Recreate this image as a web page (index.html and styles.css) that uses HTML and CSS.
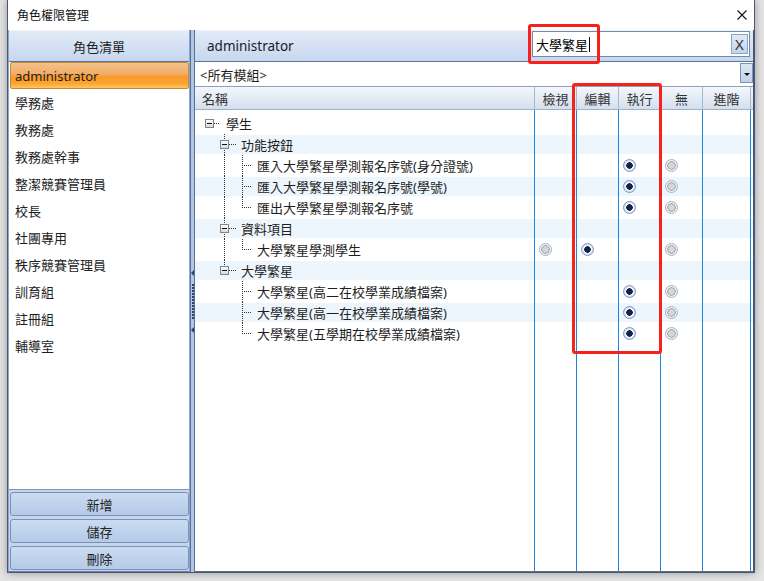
FILE: index.html
```html
<!DOCTYPE html>
<html lang="zh-Hant">

    <head>
        <meta charset="UTF-8">
        <meta name="viewport" content="width=device-width, initial-scale=1.0">
        <title>角色權限管理</title>
        <link rel="stylesheet" href="styles.css">
    </head>

    <body>
        <div class="window">
            <div class="titlebar">
                <span class="title">角色權限管理</span>
                <svg class="close" width="10" height="10" viewBox="0 0 10 10">
                    <path d="M0.5 0.5 L9.5 9.5 M9.5 0.5 L0.5 9.5" stroke="#111" stroke-width="1.1" fill="none" />
                </svg>
            </div>

            <div class="main">
                <!-- 左側：角色清單 -->
                <div class="roles">
                    <div class="pane-head center">角色清單</div>
                    <div class="role-list">
                        <div class="role sel">administrator</div>
                        <div class="role">學務處</div>
                        <div class="role">教務處</div>
                        <div class="role">教務處幹事</div>
                        <div class="role">整潔競賽管理員</div>
                        <div class="role">校長</div>
                        <div class="role">社團專用</div>
                        <div class="role">秩序競賽管理員</div>
                        <div class="role">訓育組</div>
                        <div class="role">註冊組</div>
                        <div class="role">輔導室</div>
                    </div>
                    <div class="actions">
                        <button>新增</button>
                        <button>儲存</button>
                        <button>刪除</button>
                    </div>
                </div>

                <div class="splitter">
                    <span class="arrow"></span>
                    <span class="grip"></span>
                    <span class="arrow"></span>
                </div>

                <!-- 右側：權限設定 -->
                <div class="perm">
                    <div class="pane-head">
                        <span class="role-name">administrator</span>
                        <div class="search">
                            <span>大學繁星</span><span class="caret"></span>
                            <button class="clear">X</button>
                        </div>
                    </div>

                    <div class="module">
                        <span>&lt;所有模組&gt;</span>
                        <span class="drop"><i></i></span>
                    </div>

                    <div class="thead">
                        <div class="th name">名稱</div>
                        <div class="th">檢視</div>
                        <div class="th">編輯</div>
                        <div class="th">執行</div>
                        <div class="th">無</div>
                        <div class="th">進階</div>
                        <div class="th"></div>
                    </div>

                    <div class="tbody">
                        <div class="row gap">
                            <div class="nm"></div><div class="c"></div><div class="c"></div><div class="c"></div><div class="c"></div><div class="c"></div><div class="c"></div>
                        </div>

                        <div class="row">
                            <div class="nm"><span class="exp0"><i class="box"></i></span><span class="t">學生</span></div>
                            <div class="c"></div><div class="c"></div><div class="c"></div><div class="c"></div><div class="c"></div><div class="c"></div>
                        </div>
                        <div class="row alt">
                            <div class="nm"><span class="sp"></span><span class="exp1 full"><i class="box"></i></span><span class="t">功能按鈕</span></div>
                            <div class="c"></div><div class="c"></div><div class="c"></div><div class="c"></div><div class="c"></div><div class="c"></div>
                        </div>
                        <div class="row">
                            <div class="nm"><span class="sp"></span><span class="vl"></span><span class="elb full"></span><span class="t">匯入大學繁星學測報名序號(身分證號)</span></div>
                            <div class="c"></div><div class="c"></div><div class="c"><i class="radio"></i></div><div class="c"><i class="radio off"></i></div><div class="c"></div><div class="c"></div>
                        </div>
                        <div class="row alt">
                            <div class="nm"><span class="sp"></span><span class="vl"></span><span class="elb full"></span><span class="t">匯入大學繁星學測報名序號(學號)</span></div>
                            <div class="c"></div><div class="c"></div><div class="c"><i class="radio"></i></div><div class="c"><i class="radio off"></i></div><div class="c"></div><div class="c"></div>
                        </div>
                        <div class="row">
                            <div class="nm"><span class="sp"></span><span class="vl"></span><span class="elb"></span><span class="t">匯出大學繁星學測報名序號</span></div>
                            <div class="c"></div><div class="c"></div><div class="c"><i class="radio"></i></div><div class="c"><i class="radio off"></i></div><div class="c"></div><div class="c"></div>
                        </div>
                        <div class="row alt">
                            <div class="nm"><span class="sp"></span><span class="exp1 full"><i class="box"></i></span><span class="t">資料項目</span></div>
                            <div class="c"></div><div class="c"></div><div class="c"></div><div class="c"></div><div class="c"></div><div class="c"></div>
                        </div>
                        <div class="row">
                            <div class="nm"><span class="sp"></span><span class="vl"></span><span class="elb"></span><span class="t">大學繁星學測學生</span></div>
                            <div class="c"><i class="radio off"></i></div><div class="c"><i class="radio"></i></div><div class="c"></div><div class="c"><i class="radio off"></i></div><div class="c"></div><div class="c"></div>
                        </div>
                        <div class="row alt">
                            <div class="nm"><span class="sp"></span><span class="exp1"><i class="box"></i></span><span class="t">大學繁星</span></div>
                            <div class="c"></div><div class="c"></div><div class="c"></div><div class="c"></div><div class="c"></div><div class="c"></div>
                        </div>
                        <div class="row">
                            <div class="nm"><span class="sp"></span><span class="vl none"></span><span class="elb full"></span><span class="t">大學繁星(高二在校學業成績檔案)</span></div>
                            <div class="c"></div><div class="c"></div><div class="c"><i class="radio"></i></div><div class="c"><i class="radio off"></i></div><div class="c"></div><div class="c"></div>
                        </div>
                        <div class="row alt">
                            <div class="nm"><span class="sp"></span><span class="vl none"></span><span class="elb full"></span><span class="t">大學繁星(高一在校學業成績檔案)</span></div>
                            <div class="c"></div><div class="c"></div><div class="c"><i class="radio"></i></div><div class="c"><i class="radio off"></i></div><div class="c"></div><div class="c"></div>
                        </div>
                        <div class="row">
                            <div class="nm"><span class="sp"></span><span class="vl none"></span><span class="elb"></span><span class="t">大學繁星(五學期在校學業成績檔案)</span></div>
                            <div class="c"></div><div class="c"></div><div class="c"><i class="radio"></i></div><div class="c"><i class="radio off"></i></div><div class="c"></div><div class="c"></div>
                        </div>

                        <div class="row fill">
                            <div class="nm"></div><div class="c"></div><div class="c"></div><div class="c"></div><div class="c"></div><div class="c"></div><div class="c"></div>
                        </div>
                    </div>
                </div>
            </div>
        </div>

        <!-- 標註框 -->
        <div class="mark mark-search"></div>
        <div class="mark mark-cols"></div>
    </body>

</html>
```

FILE: styles.css
```css
* {
    box-sizing: border-box;
}

body {
    margin: 0;
    height: 581px;
    overflow: hidden;
    background-color: #e4e4e4;
    font-family: "Noto Sans", "Noto Sans CJK TC", sans-serif;
    font-size: 13px;
    color: #1e1e1e;
}

.window {
    margin-left: 7px;
    width: 748px;
    height: 573px;
    border: 1px solid #4c5871;
    border-top: 0;
    background: #fff;
    box-shadow: 0 0 8px rgba(0, 0, 0, 0.35);
    display: flex;
    flex-direction: column;
}

.titlebar {
    height: 30px;
    flex: none;
    display: flex;
    align-items: center;
    justify-content: space-between;
    padding: 0 7px 0 9px;
    font-size: 12px;
    color: #111;
}

.main {
    height: 542px;
    display: flex;
}

/* 面板標頭 */
.pane-head {
    height: 32px;
    flex: none;
    border-top: 1px solid #eef3fa;
    border-bottom: 1px solid #5d7399;
    background: linear-gradient(#e2ebf7, #c5d7ef);
    display: flex;
    align-items: center;
}

.pane-head.center {
    justify-content: center;
}

.roles {
    width: 182px;
    display: flex;
    flex-direction: column;
    border-left: 1px solid #8ea8cd;
    border-right: 1px solid #8ea8cd;
    border-bottom: 1px solid #6b80a6;
}

.role-list {
    flex: 1;
    background: #fff;
    padding-left: 1px;
}

.role {
    height: 27px;
    display: flex;
    align-items: center;
    padding-left: 5px;
}

.role.sel {
    padding-left: 4px;
    border: 1px solid #c58b3c;
    border-radius: 2px;
    background: linear-gradient(#f4c08a 0%, #f1ad66 45%, #fa9a2a 55%, #fca532 82%, #fec560 100%);
}

.actions {
    flex: none;
    border-top: 1px solid #7f96bb;
    background: #c3d6ee;
    padding: 2px 0 1px 1px;
    display: flex;
    flex-direction: column;
    gap: 3px;
}

.actions button {
    height: 24px;
    border: 1px solid #7d91b6;
    border-radius: 3px;
    background: linear-gradient(#cbdcf2, #b3cae7);
    font: inherit;
    color: #222;
    padding: 0;
}

.splitter {
    width: 5px;
    border-left: 1px solid #56709c;
    border-right: 1px solid #56709c;
    background: #b4c7e2;
    display: flex;
    flex-direction: column;
    align-items: center;
    justify-content: center;
    gap: 8px;
}

.splitter .arrow {
    width: 0;
    height: 0;
    border-top: 3px solid transparent;
    border-bottom: 3px solid transparent;
    border-right: 3px solid #2d4068;
}

.splitter .grip {
    width: 2px;
    height: 35px;
    background: repeating-linear-gradient(#2d4068 0 2px, transparent 2px 3px);
}

.perm {
    width: 559px;
    display: flex;
    flex-direction: column;
    border-right: 1px solid #44557a;
    border-bottom: 1px solid #5b6f94;
}

.perm .pane-head {
    justify-content: space-between;
    padding-left: 12px;
}

.role-name {
    font-size: 13.5px;
    color: #1a1a2a;
}

.search {
    align-self: flex-start;
    width: 218px;
    height: 26px;
    margin-right: 3px;
    border: 1px solid #7489ad;
    background: #fff;
    display: flex;
    align-items: center;
    padding-left: 3px;
    color: #000;
}

.search .caret {
    width: 1px;
    height: 15px;
    margin-left: 1px;
    background: #000;
}

.search .clear {
    margin-left: auto;
    margin-right: 1px;
    width: 17px;
    height: 20px;
    padding: 0;
    border: 1px solid #8ea4c4;
    background: linear-gradient(#e0eaf6, #c2d4ec);
    font: 15px "Noto Sans", sans-serif;
    color: #333;
    line-height: 18px;
}

.module {
    height: 25px;
    flex: none;
    border-bottom: 1px solid #8c9fbd;
    display: flex;
    align-items: center;
    padding-left: 5px;
}

.module .drop {
    margin-left: auto;
    align-self: flex-start;
    margin-top: 1px;
    width: 13px;
    height: 20px;
    border: 1px solid #7f93b5;
    background: linear-gradient(#dce7f5, #bfd2ea);
    display: flex;
    align-items: center;
    justify-content: center;
    padding-top: 3px;
}

.module .drop i {
    width: 0;
    height: 0;
    border-left: 3px solid transparent;
    border-right: 3px solid transparent;
    border-top: 3px solid #111;
}

/* 權限表格 */
.thead,
.row {
    display: grid;
    grid-template-columns: 339px 42px 42px 42px 42px 48px 3px;
}

.thead {
    height: 23px;
    flex: none;
    border-bottom: 1px solid #9fb0c9;
    background: linear-gradient(#f5f8fc, #d4dfee);
    color: #333;
}

.th {
    display: flex;
    align-items: center;
    justify-content: center;
    border-left: 1px solid #a8b7cd;
}

.th.name {
    justify-content: flex-start;
    padding-left: 7px;
    border-left: 0;
}

.tbody {
    flex: 1;
    display: flex;
    flex-direction: column;
}

.row {
    height: 21px;
    flex: none;
}

.row.gap {
    height: 3px;
}

.row.fill {
    flex: 1;
    height: auto;
}

.row.alt {
    background: linear-gradient(transparent 1px, #eef6fd 1px, #eef6fd 20px, transparent 20px);
}

.c {
    border-left: 1px solid #1b86e2;
    display: flex;
    align-items: center;
    padding-left: 4px;
}

.nm {
    display: flex;
    padding-left: 10px;
}

.nm .t {
    align-self: center;
    white-space: nowrap;
}

/* 樹狀連接線 */
.sp {
    width: 15px;
}

.exp0,
.exp1 {
    display: flex;
    align-items: center;
    width: 21px;
    background-repeat: no-repeat;
}

.exp0 {
    background-image: repeating-linear-gradient(to right, #333 0 1px, transparent 1px 2px);
    background-size: 6px 1px;
    background-position: 9px 50%;
}

.exp1 {
    background-image:
        repeating-linear-gradient(to right, #333 0 1px, transparent 1px 2px),
        repeating-linear-gradient(#333 0 1px, transparent 1px 2px);
    background-size: 7px 1px, 1px 50%;
    background-position: 9px 50%, 4px 0;
}

.exp1.full {
    background-size: 7px 1px, 1px 100%;
}

.box {
    width: 9px;
    height: 9px;
    border: 1px solid #858585;
    background: linear-gradient(#ffffff, #d9d9d9);
    display: flex;
    align-items: center;
    justify-content: center;
}

.box::after {
    content: "";
    width: 5px;
    height: 1px;
    background: #111;
}

.vl {
    width: 17px;
    background: repeating-linear-gradient(#333 0 1px, transparent 1px 2px) no-repeat 4px 0 / 1px 100%;
}

.vl.none {
    background: none;
}

.elb {
    width: 20px;
    background-image:
        repeating-linear-gradient(to right, #333 0 1px, transparent 1px 2px),
        repeating-linear-gradient(#333 0 1px, transparent 1px 2px);
    background-repeat: no-repeat;
    background-size: 10px 1px, 1px 50%;
    background-position: 5px 50%, 5px 0;
}

.elb.full {
    background-size: 10px 1px, 1px 100%;
}

.radio {
    width: 13px;
    height: 13px;
    border-radius: 50%;
    border: 1px solid #7c9bc8;
    background: radial-gradient(circle, #13234a 0 3px, #f6f8fb 3.5px 4.2px, #d6deea 4.8px);
}

.radio.off {
    border-color: #9fb3d2;
    background: radial-gradient(circle, #d6d6d6 0 3px, #a8a8a8 3.4px 4px, #f2f2f2 4.5px);
}

/* 紅色標註框 */
.mark {
    position: absolute;
    border: 3px solid #f5231c;
    border-radius: 3px;
}

.mark-search {
    left: 528px;
    top: 24px;
    width: 72px;
    height: 40px;
}

.mark-cols {
    left: 572px;
    top: 83px;
    width: 90px;
    height: 271px;
}
```
